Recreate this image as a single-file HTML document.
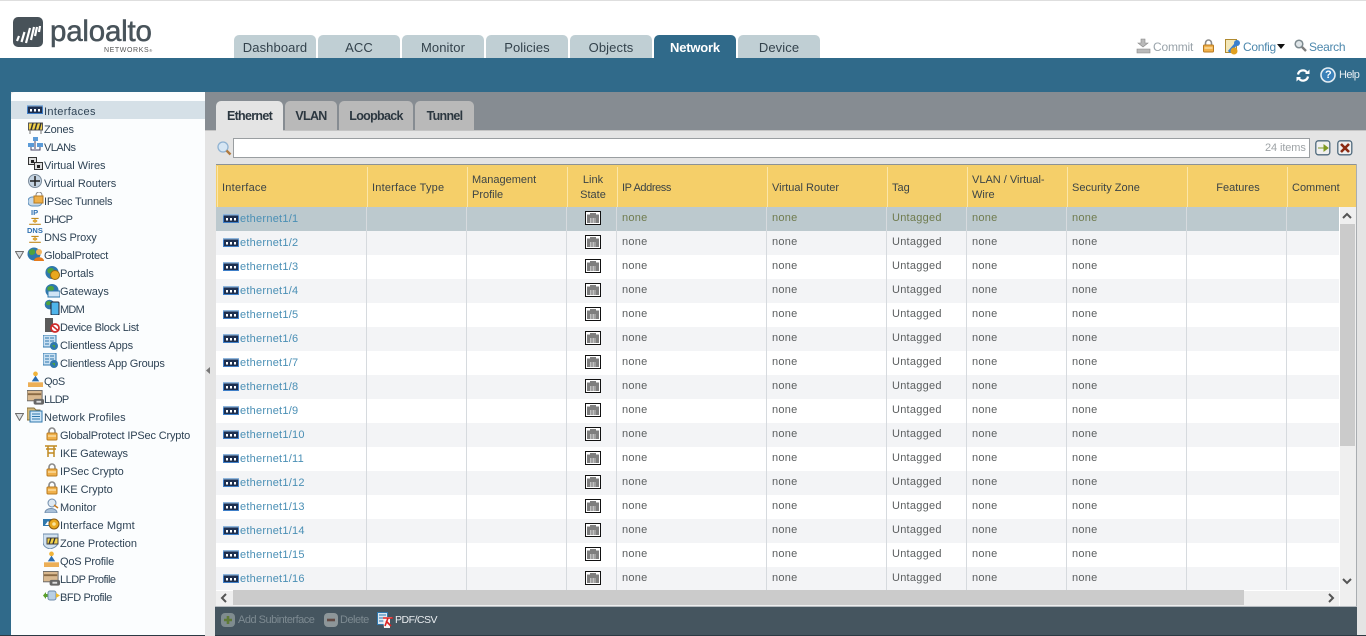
<!DOCTYPE html>
<html><head><meta charset="utf-8"><title>Network</title>
<style>
html,body{margin:0;padding:0;width:1366px;height:636px;overflow:hidden;background:#e4e4e4;font-family:"Liberation Sans",sans-serif;font-size:11px;letter-spacing:.25px}
div,span,svg{position:absolute}
.t{white-space:nowrap}
.top{top:35px;height:23px;width:82px;background:#c0cfd4;border-radius:5px 5px 0 0;text-align:center;font-size:13px;line-height:26px;color:#33424c;letter-spacing:.1px}
.sub{top:101px;height:29px;background:#b9b9b9;border-radius:5px 5px 0 0;text-align:center;font-size:12.5px;font-weight:bold;line-height:31px;color:#2c3740;letter-spacing:-.7px}
.n{left:0;height:18px;line-height:20px;color:#2f4355;white-space:nowrap}
.hd{top:165px;height:42px;color:#3c4446;line-height:14px;margin-top:1px;letter-spacing:0}
.hs{top:167px;width:1px;height:40px;background:#fbe6a8}
.r{left:216px;width:1123px;height:24px}
.c{top:0;line-height:22px;color:#5c5f60;white-space:nowrap}
.l{left:24px;color:#4a8fb5;top:0;line-height:24px;white-space:nowrap}
.v{top:207px;width:1px;height:383px;background:#d6dade}
.f{top:606px;height:30px;line-height:28px;color:#7d8a91;white-space:nowrap;letter-spacing:-.5px}
</style></head><body>
<svg width="0" height="0" style="left:0;top:0"><defs>
<symbol id="e" viewBox="0 0 16 9"><rect x=".5" y=".5" width="15" height="8" fill="#1d2f4f" stroke="#3f7fc8"/><rect x="0" y="0" width="16" height="1.500" fill="#8fb6dc"/><rect x="3" y="4" width="2" height="2.500" fill="#fff"/><rect x="7" y="4" width="2" height="2.500" fill="#fff"/><rect x="11" y="4" width="2" height="2.500" fill="#fff"/></symbol>
<symbol id="p" viewBox="0 0 16 14"><rect x=".5" y=".5" width="15" height="13" fill="#fff" stroke="#111"/><path d="M2 3.500h3V2h6v1.500h3V12H2z" fill="#7f7f7f"/><path d="M5.500 7v5M7 7v5M8.500 7v5M10 7v5" stroke="#ddd" stroke-width=".7"/></symbol>
<symbol id="lock" viewBox="0 0 12 14"><path d="M3 7V4a3 3 0 0 1 6 0v3" fill="none" stroke="#8a8a8a" stroke-width="1.600"/><rect x="1" y="6" width="10" height="7" rx="1" fill="#f0b04a" stroke="#b77a20"/><path d="M2 9h8" stroke="#fff2c8"/></symbol>
<symbol id="globe" viewBox="0 0 16 16"><circle cx="8" cy="8" r="7" fill="#2f78ad"/><path d="M3 5c3-3 6-2 7 0s-2 4-4 4-3-1-3-4z" fill="#4ea33e"/></symbol>
<symbol id="bridge" viewBox="0 0 16 11"><path d="M0 10h16M8 2v6M3 2h10M0 10" stroke="#c08a20" stroke-width="1.600" fill="none"/><rect x="5" y="4" width="6" height="3" fill="#e0a93a"/></symbol>
<symbol id="qos" viewBox="0 0 16 18"><circle cx="8" cy="3" r="2.500" fill="#f1b43a"/><path d="M4 11l4-6 4 6z" fill="#2b6cb0"/><rect x="0" y="12" width="16" height="5" fill="#e9a13a" opacity=".85"/></symbol>
<symbol id="lldp" viewBox="0 0 18 15"><rect x="0" y="0" width="16" height="11" fill="#d9b990" stroke="#666"/><path d="M1 4h14" stroke="#8a6a44" stroke-width="2"/><rect x="7" y="9" width="11" height="6" rx="2" fill="#666"/><rect x="10" y="11" width="5" height="2" fill="#ddd"/></symbol>
<symbol id="doc" viewBox="0 0 16 15"><rect x="0" y="0" width="13" height="12" fill="#c9e0f2" stroke="#2f78ad"/><path d="M2 3h4M7 3h4M2 6h4M7 6h4M2 9h4" stroke="#2f78ad"/><circle cx="11" cy="11" r="4" fill="#2f78ad"/><path d="M9 10h3v3z" fill="#4ea33e"/></symbol>
</defs></svg>

<div style="left:0;top:0;width:1366px;height:1px;background:#dedede"></div>
<div style="left:0;top:1px;width:1366px;height:57px;background:#fff"></div>
<svg style="left:13px;top:17px" width="31" height="31" viewBox="0 0 31 31"><rect width="30" height="30" rx="5" fill="#485259"/><path d="M4 24l2-5M8.500 25l3-10M13 26l4-15M18 23l3-13M22 19l2-9M26 15l1-6" stroke="#fff" stroke-width="2.200" fill="none"/></svg>
<div class="t" style="left:50px;top:12px;font-size:29.5px;line-height:40px;color:#48535a;letter-spacing:-.2px;-webkit-text-stroke:.5px #48535a">paloalto</div>
<div class="t" style="left:104px;top:47px;font-size:7px;line-height:8px;color:#555;letter-spacing:.6px">NETWORKS<span style="position:static;font-size:4px">®</span></div>

<div class="top" style="left:234px">Dashboard</div>
<div class="top" style="left:318px">ACC</div>
<div class="top" style="left:402px">Monitor</div>
<div class="top" style="left:486px">Policies</div>
<div class="top" style="left:570px">Objects</div>
<div class="top" style="left:654px;background:#306a8a;color:#fff;font-weight:bold;font-size:13px;letter-spacing:-.2px">Network</div>
<div class="top" style="left:738px">Device</div>

<svg style="left:1136px;top:38px" width="15" height="16" viewBox="0 0 15 16"><path d="M5 1h4v4h3l-5 4-5-4h3zM1 11h13v4H1z" fill="#b9b9b9" stroke="#888" stroke-width=".6"/></svg>
<div class="t" style="left:1153px;top:40px;font-size:12px;line-height:15px;color:#99a3aa;letter-spacing:-.2px">Commit</div>
<svg style="left:1202px;top:39px" width="13" height="14"><use href="#lock"/></svg>
<svg style="left:1225px;top:39px" width="17" height="16" viewBox="0 0 17 16"><rect x=".5" y=".5" width="11" height="13" fill="#f3e7b8" stroke="#b08a30"/><path d="M4 13L11 5" stroke="#3a80cf" stroke-width="3"/><circle cx="12" cy="4" r="3" fill="#3a80cf"/><circle cx="9" cy="12" r="3.500" fill="#e0a020"/></svg>
<div class="t" style="left:1243px;top:40px;font-size:12px;line-height:15px;color:#4d88ad;letter-spacing:-.3px">Config</div>
<svg style="left:1277px;top:44px" width="8" height="5"><path d="M0 0h8L4 5z" fill="#111"/></svg>
<svg style="left:1294px;top:39px" width="13" height="13" viewBox="0 0 13 13"><circle cx="5" cy="5" r="3.800" fill="#dfe5e8" stroke="#7d8a8f" stroke-width="1.500"/><path d="M8 8l4 4" stroke="#7d7d7d" stroke-width="2.400"/></svg>
<div class="t" style="left:1309px;top:40px;font-size:12px;line-height:15px;color:#4d88ad;letter-spacing:-.3px">Search</div>

<div style="left:0;top:58px;width:1366px;height:34px;background:#306a8a"></div>
<svg style="left:1296px;top:69px" width="14" height="13" viewBox="0 0 14 13"><path d="M2 5.500A5 5 0 0 1 11 3.500M12 7.500A5 5 0 0 1 3 9.500" fill="none" stroke="#fff" stroke-width="2.200"/><path d="M9 5h4.500V.5zM5 8H.5v4.500z" fill="#fff"/></svg>
<svg style="left:1320px;top:67px" width="17" height="16" viewBox="0 0 17 16"><circle cx="8" cy="8" r="7" fill="#3a80b8" stroke="#e6eef3" stroke-width="1.600"/></svg>
<div class="t" style="left:1325px;top:69px;font-size:11px;font-weight:bold;line-height:13px;color:#fff">?</div>
<div class="t" style="left:1339px;top:68px;font-size:11px;line-height:14px;color:#e8eef2;letter-spacing:-.6px">Help</div>

<div style="left:0;top:92px;width:11px;height:544px;background:#306a8a"></div>
<div style="left:11px;top:92px;width:194px;height:543px;background:#fbfdfe;border-radius:4px 0 0 0;overflow:hidden">
<div style="left:0;top:9px;width:194px;height:18px;background:#d5e0e7"></div>
</div>
<div style="left:0;top:635px;width:1366px;height:1px;background:#2c3a44"></div>

<!-- tree -->
<div style="left:0;top:0;width:205px;height:636px">
<svg style="left:27px;top:105px" width="16" height="9"><use href="#e"/></svg><div class="n" style="left:44px;top:102px;letter-spacing:.35px">Interfaces</div>
<svg style="left:28px;top:122px" width="15" height="12" viewBox="0 0 15 12"><rect x=".5" y="1" width="14" height="7" fill="#f3d24a" stroke="#555"/><path d="M3 8L5 1M7 8L9 1M11 8L13 1" stroke="#333" stroke-width="1.500"/><path d="M2 8v4M13 8v4" stroke="#777"/></svg><div class="n" style="left:44px;top:120px;letter-spacing:-.15px">Zones</div>
<svg style="left:28px;top:137px" width="15" height="15" viewBox="0 0 15 15"><rect x="5" y="0" width="5" height="4" fill="#5b9bd8"/><rect x="0" y="6" width="6" height="4" fill="#5b9bd8"/><rect x="9" y="6" width="6" height="4" fill="#5b9bd8"/><path d="M7 4v8M3 10v3h9v-3" stroke="#446" fill="none"/></svg><div class="n" style="left:44px;top:138px;letter-spacing:-.55px">VLANs</div>
<svg style="left:28px;top:157px" width="15" height="13" viewBox="0 0 15 13"><rect x=".5" y=".5" width="8" height="7" fill="#ddd" stroke="#333"/><rect x="6.500" y="5.500" width="8" height="7" fill="#ddd" stroke="#333"/><rect x="3" y="3" width="3" height="3" fill="#222"/><rect x="9" y="8" width="3" height="3" fill="#222"/></svg><div class="n" style="left:44px;top:156px;letter-spacing:-.05px">Virtual Wires</div>
<svg style="left:28px;top:174px" width="14" height="14" viewBox="0 0 14 14"><circle cx="7" cy="7" r="6.500" fill="#c5d4e2" stroke="#7a8a9a"/><path d="M7 2v10M2 7h10" stroke="#222" stroke-width="1.500"/></svg><div class="n" style="left:44px;top:174px;letter-spacing:-.02px">Virtual Routers</div>
<svg style="left:28px;top:192px" width="16" height="15" viewBox="0 0 16 15"><rect x="0" y="5" width="14" height="9" rx="4" fill="#c5d9ea" stroke="#5e8fbb"/><path d="M8 5V3a3 3 0 0 1 6 0v2" fill="none" stroke="#888"/><rect x="6" y="4" width="9" height="7" fill="#eeb04a" stroke="#b77a20"/></svg><div class="n" style="left:44px;top:192px;letter-spacing:-.2px">IPSec Tunnels</div>
<div class="t" style="left:31px;top:208px;font-size:7.500px;line-height:9px;font-weight:bold;color:#2d6fb0;letter-spacing:0">IP</div><svg style="left:29px;top:217px" width="12" height="8"><use href="#bridge"/></svg><div class="n" style="left:44px;top:210px;letter-spacing:-.75px">DHCP</div>
<div class="t" style="left:27px;top:226px;font-size:7.500px;line-height:9px;font-weight:bold;color:#2d6fb0;letter-spacing:0">DNS</div><svg style="left:29px;top:235px" width="12" height="8"><use href="#bridge"/></svg><div class="n" style="left:44px;top:228px;letter-spacing:-.2px">DNS Proxy</div>
<svg style="left:15px;top:251px" width="9" height="8" viewBox="0 0 9 8"><path d="M.5.5h8L4.500 7.500z" fill="#dbe0e3" stroke="#6d6d6d"/></svg>
<svg style="left:27px;top:246px" width="17" height="16" viewBox="0 0 17 16"><circle cx="7" cy="8" r="6.500" fill="#2f78ad"/><path d="M2 5c3-3 5-2 6 0s-1 4-3 4-3-1-3-4z" fill="#4ea33e"/><circle cx="12" cy="6" r="3" fill="#f2b560"/><path d="M7 15c0-5 10-5 10 0z" fill="#e57a1c"/></svg><div class="n" style="left:44px;top:246px;letter-spacing:-.2px">GlobalProtect</div>

<svg style="left:44px;top:265px" width="16" height="15"><use href="#globe"/><circle cx="11" cy="10" r="4.500" fill="#e9a81e" stroke="#9a6a10"/></svg><div class="n" style="left:60px;top:264px;letter-spacing:-.05px">Portals</div>
<svg style="left:44px;top:283px" width="16" height="15"><use href="#globe"/><rect x="4" y="8" width="12" height="6" fill="#cfe4f5" stroke="#2f78ad"/></svg><div class="n" style="left:60px;top:282px;letter-spacing:0">Gateways</div>
<svg style="left:44px;top:299px" width="16" height="16"><use href="#globe" width="11" height="11"/><rect x="7" y="3" width="8" height="13" rx="1" fill="#4fb4ea" stroke="#223"/></svg><div class="n" style="left:60px;top:300px;letter-spacing:-.75px">MDM</div>
<svg style="left:45px;top:318px" width="15" height="15" viewBox="0 0 15 15"><rect x="0" y="0" width="8" height="14" fill="#5a5a5a"/><circle cx="10" cy="10" r="4" fill="#fff" stroke="#cf2a2a" stroke-width="1.800"/><path d="M7 7.500l6 5" stroke="#cf2a2a" stroke-width="1.500"/></svg><div class="n" style="left:60px;top:318px;letter-spacing:-.3px">Device Block List</div>
<svg style="left:43px;top:335px" width="16" height="15"><use href="#doc"/></svg><div class="n" style="left:60px;top:336px;letter-spacing:-.15px">Clientless Apps</div>
<svg style="left:43px;top:353px" width="16" height="15"><use href="#doc"/></svg><div class="n" style="left:60px;top:354px;letter-spacing:-.2px">Clientless App Groups</div>
<svg style="left:28px;top:371px" width="15" height="17"><use href="#qos"/></svg><div class="n" style="left:44px;top:372px;letter-spacing:-.4px">QoS</div>
<svg style="left:27px;top:390px" width="17" height="15"><use href="#lldp"/></svg><div class="n" style="left:44px;top:390px;letter-spacing:-.75px">LLDP</div>
<svg style="left:15px;top:413px" width="9" height="8" viewBox="0 0 9 8"><path d="M.5.5h8L4.500 7.500z" fill="#dbe0e3" stroke="#6d6d6d"/></svg>
<svg style="left:27px;top:407px" width="16" height="16" viewBox="0 0 16 16"><path d="M0 1h7l2 2h4v10H0z" fill="#d4b878" stroke="#8a7440"/><rect x="3" y="4" width="12" height="11" fill="#cfe6f8" stroke="#2f78ad"/><path d="M5 7h8M5 9.500h8M5 12h8" stroke="#2f78ad"/></svg><div class="n" style="left:44px;top:408px;letter-spacing:.1px">Network Profiles</div>
<svg style="left:46px;top:427px" width="12" height="14"><use href="#lock"/></svg><div class="n" style="left:60px;top:426px;letter-spacing:-.17px">GlobalProtect IPSec Crypto</div>
<svg style="left:45px;top:445px" width="12" height="12" viewBox="0 0 12 12"><path d="M0 1h12M1 4h10M3 1v11M9 1v11M3 8h6" stroke="#c08a20" stroke-width="1.500" fill="none"/></svg><div class="n" style="left:60px;top:444px;letter-spacing:-.15px">IKE Gateways</div>
<svg style="left:46px;top:463px" width="12" height="14"><use href="#lock"/></svg><div class="n" style="left:60px;top:462px;letter-spacing:-.1px">IPSec Crypto</div>
<svg style="left:46px;top:481px" width="12" height="14"><use href="#lock"/></svg><div class="n" style="left:60px;top:480px;letter-spacing:-.05px">IKE Crypto</div>
<svg style="left:44px;top:498px" width="15" height="15" viewBox="0 0 15 15"><circle cx="8" cy="5" r="4" fill="#dfe9f2" stroke="#6f8cab"/><path d="M1 15c0-6 12-6 12 0z" fill="#a9c0d8" stroke="#6f8cab"/><path d="M10 7l4 3" stroke="#c87a20" stroke-width="1.500"/></svg><div class="n" style="left:60px;top:498px;letter-spacing:-.05px">Monitor</div>
<svg style="left:43px;top:517px" width="17" height="14" viewBox="0 0 17 14"><rect x="0" y="2" width="10" height="7" fill="#2f78ad"/><path d="M2 8l3-4 3 4z" fill="#fff"/><circle cx="11" cy="7" r="5" fill="#e9a81e" stroke="#8a5a10"/><circle cx="11" cy="7" r="1.800" fill="#fbe49a"/></svg><div class="n" style="left:60px;top:516px;letter-spacing:.1px">Interface Mgmt</div>
<svg style="left:43px;top:533px" width="16" height="16" viewBox="0 0 16 16"><path d="M0 1h15v8c0 4-4 6-8 7-4-1-7-3-7-7z" fill="#d2e2f0" stroke="#6f8cab"/><rect x="4" y="5" width="11" height="6" fill="#f3d24a" stroke="#444"/><path d="M6 11l2-6M10 11l2-6" stroke="#333" stroke-width="1.300"/></svg><div class="n" style="left:60px;top:534px;letter-spacing:-.05px">Zone Protection</div>
<svg style="left:44px;top:551px" width="15" height="17"><use href="#qos"/></svg><div class="n" style="left:60px;top:552px;letter-spacing:-.2px">QoS Profile</div>
<svg style="left:43px;top:571px" width="17" height="15"><use href="#lldp"/></svg><div class="n" style="left:60px;top:570px;letter-spacing:-.5px">LLDP Profile</div>
<svg style="left:43px;top:590px" width="17" height="11" viewBox="0 0 17 11"><path d="M0 5.500L3 2v2h2v3H3v2z" fill="#5aa02c"/><rect x="5" y="1" width="8" height="9" rx="2" fill="#b8cfe4" stroke="#6f8cab"/><path d="M13 3l4 2.500L13 8z" fill="#e9b82e"/></svg><div class="n" style="left:60px;top:588px;letter-spacing:-.4px">BFD Profile</div>
</div>

<!-- splitter -->
<div style="left:205px;top:92px;width:10px;height:544px;background:#e4e4e4"></div>
<div style="left:205px;top:92px;width:1161px;height:38px;background:#868c92"></div>
<svg style="left:206px;top:367px" width="4" height="7"><path d="M4 0v7L0 3.500z" fill="#777"/></svg>
<div style="left:205px;top:130px;width:1161px;height:1px;background:#c4c4c4"></div>

<div class="sub" style="left:216px;width:67px;background:#e4e4e4;height:30px">Ethernet</div>
<div class="sub" style="left:285px;width:52px">VLAN</div>
<div class="sub" style="left:339px;width:74px">Loopback</div>
<div class="sub" style="left:415px;width:59px">Tunnel</div>

<svg style="left:217px;top:141px" width="15" height="15" viewBox="0 0 15 15"><circle cx="6" cy="6" r="5" fill="#d6e6f4" stroke="#8fb2d2" stroke-width="1.300"/><path d="M9.500 9.500l4 4" stroke="#b07a40" stroke-width="2.400"/></svg>
<div style="left:233px;top:138px;width:1075px;height:18px;background:#fff;border:1px solid #9a9ea1"></div>
<div class="t" style="left:1265px;top:141px;line-height:14px;color:#9ea3a6;letter-spacing:-.1px">24 items</div>
<svg style="left:1315px;top:140px" width="16" height="16" viewBox="0 0 16 16"><rect x=".8" y=".8" width="14" height="14" rx="2.500" fill="#f0f0f0" stroke="#4f6a7d" stroke-width="1.300"/><path d="M3 8h6V5l4 3-4 3V8" fill="#7f9a24" stroke="#7f9a24"/></svg>
<svg style="left:1337px;top:140px" width="16" height="16" viewBox="0 0 16 16"><rect x=".8" y=".8" width="14" height="14" rx="2.500" fill="#f0f0f0" stroke="#4f6a7d" stroke-width="1.300"/><path d="M4 4l8 8M12 4l-8 8" stroke="#8a2a12" stroke-width="2.600"/></svg>

<!-- table -->
<div style="left:216px;top:164px;width:1141px;height:443px;border:0;background:#fff"></div>
<div style="left:216px;top:164px;width:1141px;height:1px;background:#8c9296"></div>
<div style="left:216px;top:165px;width:1140px;height:42px;background:#f5cf69"></div>
<div style="left:217px;top:166px;width:1px;height:41px;background:#fbe6a8"></div>
<div class="hs" style="left:367px"></div><div class="hs" style="left:467px"></div><div class="hs" style="left:567px"></div><div class="hs" style="left:617px"></div><div class="hs" style="left:767px"></div><div class="hs" style="left:887px"></div><div class="hs" style="left:967px"></div><div class="hs" style="left:1067px"></div><div class="hs" style="left:1187px"></div><div class="hs" style="left:1287px"></div>
<div class="hd t" style="left:222px;top:180px;height:14px;letter-spacing:.25px">Interface</div>
<div class="hd t" style="left:372px;top:180px;height:14px;letter-spacing:.2px">Interface Type</div>
<div class="hd" style="left:472px;top:172px;height:28px;width:90px;line-height:15px">Management Profile</div>
<div class="hd" style="left:577px;top:172px;height:28px;width:32px;text-align:center;line-height:15px">Link State</div>
<div class="hd t" style="left:622px;top:180px;height:14px;letter-spacing:-.4px">IP Address</div>
<div class="hd t" style="left:772px;top:180px;height:14px">Virtual Router</div>
<div class="hd t" style="left:892px;top:180px;height:14px">Tag</div>
<div class="hd" style="left:972px;top:172px;height:28px;width:90px;line-height:15px">VLAN / Virtual-Wire</div>
<div class="hd t" style="left:1072px;top:180px;height:14px">Security Zone</div>
<div class="hd t" style="left:1188px;top:180px;height:14px;width:100px;text-align:center">Features</div>
<div class="hd t" style="left:1292px;top:180px;height:14px">Comment</div>

<div class="r" style="top:207px;background:#bcc9ce"><span class="l">ethernet1/1</span><svg style="left:7px;top:7px" width="16" height="9"><use href="#e"/></svg><svg style="left:369px;top:4px" width="16" height="14"><use href="#p"/></svg><span class="c" style="left:406px;color:#6f7b4e">none</span><span class="c" style="left:556px;color:#6f7b4e">none</span><span class="c" style="left:676px;color:#6f7b4e">Untagged</span><span class="c" style="left:756px;color:#6f7b4e">none</span><span class="c" style="left:856px;color:#6f7b4e">none</span></div>
<div class="r" style="top:231px;background:#f3f4f6"><span class="l">ethernet1/2</span><svg style="left:7px;top:7px" width="16" height="9"><use href="#e"/></svg><svg style="left:369px;top:4px" width="16" height="14"><use href="#p"/></svg><span class="c" style="left:406px">none</span><span class="c" style="left:556px">none</span><span class="c" style="left:676px">Untagged</span><span class="c" style="left:756px">none</span><span class="c" style="left:856px">none</span></div>
<div class="r" style="top:255px;background:#fff"><span class="l">ethernet1/3</span><svg style="left:7px;top:7px" width="16" height="9"><use href="#e"/></svg><svg style="left:369px;top:4px" width="16" height="14"><use href="#p"/></svg><span class="c" style="left:406px">none</span><span class="c" style="left:556px">none</span><span class="c" style="left:676px">Untagged</span><span class="c" style="left:756px">none</span><span class="c" style="left:856px">none</span></div>
<div class="r" style="top:279px;background:#f3f4f6"><span class="l">ethernet1/4</span><svg style="left:7px;top:7px" width="16" height="9"><use href="#e"/></svg><svg style="left:369px;top:4px" width="16" height="14"><use href="#p"/></svg><span class="c" style="left:406px">none</span><span class="c" style="left:556px">none</span><span class="c" style="left:676px">Untagged</span><span class="c" style="left:756px">none</span><span class="c" style="left:856px">none</span></div>
<div class="r" style="top:303px;background:#fff"><span class="l">ethernet1/5</span><svg style="left:7px;top:7px" width="16" height="9"><use href="#e"/></svg><svg style="left:369px;top:4px" width="16" height="14"><use href="#p"/></svg><span class="c" style="left:406px">none</span><span class="c" style="left:556px">none</span><span class="c" style="left:676px">Untagged</span><span class="c" style="left:756px">none</span><span class="c" style="left:856px">none</span></div>
<div class="r" style="top:327px;background:#f3f4f6"><span class="l">ethernet1/6</span><svg style="left:7px;top:7px" width="16" height="9"><use href="#e"/></svg><svg style="left:369px;top:4px" width="16" height="14"><use href="#p"/></svg><span class="c" style="left:406px">none</span><span class="c" style="left:556px">none</span><span class="c" style="left:676px">Untagged</span><span class="c" style="left:756px">none</span><span class="c" style="left:856px">none</span></div>
<div class="r" style="top:351px;background:#fff"><span class="l">ethernet1/7</span><svg style="left:7px;top:7px" width="16" height="9"><use href="#e"/></svg><svg style="left:369px;top:4px" width="16" height="14"><use href="#p"/></svg><span class="c" style="left:406px">none</span><span class="c" style="left:556px">none</span><span class="c" style="left:676px">Untagged</span><span class="c" style="left:756px">none</span><span class="c" style="left:856px">none</span></div>
<div class="r" style="top:375px;background:#f3f4f6"><span class="l">ethernet1/8</span><svg style="left:7px;top:7px" width="16" height="9"><use href="#e"/></svg><svg style="left:369px;top:4px" width="16" height="14"><use href="#p"/></svg><span class="c" style="left:406px">none</span><span class="c" style="left:556px">none</span><span class="c" style="left:676px">Untagged</span><span class="c" style="left:756px">none</span><span class="c" style="left:856px">none</span></div>
<div class="r" style="top:399px;background:#fff"><span class="l">ethernet1/9</span><svg style="left:7px;top:7px" width="16" height="9"><use href="#e"/></svg><svg style="left:369px;top:4px" width="16" height="14"><use href="#p"/></svg><span class="c" style="left:406px">none</span><span class="c" style="left:556px">none</span><span class="c" style="left:676px">Untagged</span><span class="c" style="left:756px">none</span><span class="c" style="left:856px">none</span></div>
<div class="r" style="top:423px;background:#f3f4f6"><span class="l">ethernet1/10</span><svg style="left:7px;top:7px" width="16" height="9"><use href="#e"/></svg><svg style="left:369px;top:4px" width="16" height="14"><use href="#p"/></svg><span class="c" style="left:406px">none</span><span class="c" style="left:556px">none</span><span class="c" style="left:676px">Untagged</span><span class="c" style="left:756px">none</span><span class="c" style="left:856px">none</span></div>
<div class="r" style="top:447px;background:#fff"><span class="l">ethernet1/11</span><svg style="left:7px;top:7px" width="16" height="9"><use href="#e"/></svg><svg style="left:369px;top:4px" width="16" height="14"><use href="#p"/></svg><span class="c" style="left:406px">none</span><span class="c" style="left:556px">none</span><span class="c" style="left:676px">Untagged</span><span class="c" style="left:756px">none</span><span class="c" style="left:856px">none</span></div>
<div class="r" style="top:471px;background:#f3f4f6"><span class="l">ethernet1/12</span><svg style="left:7px;top:7px" width="16" height="9"><use href="#e"/></svg><svg style="left:369px;top:4px" width="16" height="14"><use href="#p"/></svg><span class="c" style="left:406px">none</span><span class="c" style="left:556px">none</span><span class="c" style="left:676px">Untagged</span><span class="c" style="left:756px">none</span><span class="c" style="left:856px">none</span></div>
<div class="r" style="top:495px;background:#fff"><span class="l">ethernet1/13</span><svg style="left:7px;top:7px" width="16" height="9"><use href="#e"/></svg><svg style="left:369px;top:4px" width="16" height="14"><use href="#p"/></svg><span class="c" style="left:406px">none</span><span class="c" style="left:556px">none</span><span class="c" style="left:676px">Untagged</span><span class="c" style="left:756px">none</span><span class="c" style="left:856px">none</span></div>
<div class="r" style="top:519px;background:#f3f4f6"><span class="l">ethernet1/14</span><svg style="left:7px;top:7px" width="16" height="9"><use href="#e"/></svg><svg style="left:369px;top:4px" width="16" height="14"><use href="#p"/></svg><span class="c" style="left:406px">none</span><span class="c" style="left:556px">none</span><span class="c" style="left:676px">Untagged</span><span class="c" style="left:756px">none</span><span class="c" style="left:856px">none</span></div>
<div class="r" style="top:543px;background:#fff"><span class="l">ethernet1/15</span><svg style="left:7px;top:7px" width="16" height="9"><use href="#e"/></svg><svg style="left:369px;top:4px" width="16" height="14"><use href="#p"/></svg><span class="c" style="left:406px">none</span><span class="c" style="left:556px">none</span><span class="c" style="left:676px">Untagged</span><span class="c" style="left:756px">none</span><span class="c" style="left:856px">none</span></div>
<div class="r" style="top:567px;height:23px;background:#f3f4f6"><span class="l">ethernet1/16</span><svg style="left:7px;top:7px" width="16" height="9"><use href="#e"/></svg><svg style="left:369px;top:4px" width="16" height="14"><use href="#p"/></svg><span class="c" style="left:406px">none</span><span class="c" style="left:556px">none</span><span class="c" style="left:676px">Untagged</span><span class="c" style="left:756px">none</span><span class="c" style="left:856px">none</span></div>

<div class="v" style="left:366px"></div><div class="v" style="left:466px"></div><div class="v" style="left:566px"></div><div class="v" style="left:616px"></div><div class="v" style="left:766px"></div><div class="v" style="left:886px"></div><div class="v" style="left:966px"></div><div class="v" style="left:1066px"></div><div class="v" style="left:1186px"></div><div class="v" style="left:1286px"></div>

<!-- vertical scrollbar -->
<div style="left:1340px;top:207px;width:16px;height:399px;background:#efefef"></div>
<div style="left:1340px;top:224px;width:15px;height:222px;background:#cbcbcb"></div>
<svg style="left:1342px;top:212px" width="10" height="7"><path d="M1 6l4-4 4 4" fill="none" stroke="#555" stroke-width="2"/></svg>
<svg style="left:1342px;top:578px" width="10" height="7"><path d="M1 1l4 4 4-4" fill="none" stroke="#555" stroke-width="2"/></svg>
<!-- horizontal scrollbar -->
<div style="left:216px;top:590px;width:1123px;height:16px;background:#efefef;border-top:1px solid #fff;box-sizing:border-box"></div>
<div style="left:233px;top:590px;width:1011px;height:15px;background:#cbcbcb"></div>
<svg style="left:220px;top:593px" width="7" height="10"><path d="M6 1L2 5l4 4" fill="none" stroke="#555" stroke-width="2"/></svg>
<svg style="left:1328px;top:593px" width="7" height="10"><path d="M1 1l4 4-4 4" fill="none" stroke="#555" stroke-width="2"/></svg>
<div style="left:1356px;top:164px;width:1px;height:443px;background:#a9adb1"></div>

<!-- footer -->
<div style="left:215px;top:606px;width:1142px;height:29px;background:#45555f;border-top:1px solid #b5bbc0;box-sizing:border-box"></div>
<svg style="left:221px;top:613px" width="14" height="14" viewBox="0 0 14 14"><rect width="14" height="14" rx="4" fill="#7f8c8f"/><path d="M7 3v8M3 7h8" stroke="#5f7a38" stroke-width="2.600"/></svg>
<div class="f" style="left:238px">Add Subinterface</div>
<svg style="left:324px;top:613px" width="14" height="14" viewBox="0 0 14 14"><rect width="14" height="14" rx="4" fill="#8d9699"/><path d="M3 7h8" stroke="#634a44" stroke-width="2.600"/></svg>
<div class="f" style="left:340px">Delete</div>
<svg style="left:377px;top:612px" width="17" height="16" viewBox="0 0 17 16"><rect x=".5" y=".5" width="10" height="12" fill="#dbe8f2" stroke="#2f78ad"/><path d="M2 3h7M2 6h7M2 9h7" stroke="#2f78ad"/><path d="M6 5h9l-2 2v9H7z" fill="#f5f5f5"/><path d="M6 6h10M11 6l-3 8M9 9l5 5" stroke="#d22" stroke-width="1.600" fill="none"/></svg>
<div class="f" style="left:395px;color:#e9edf0;font-size:10.500px;letter-spacing:-.5px">PDF/CSV</div>
</body></html>
